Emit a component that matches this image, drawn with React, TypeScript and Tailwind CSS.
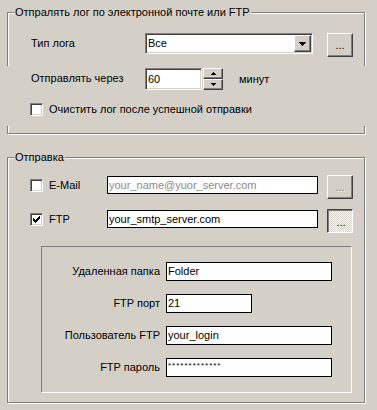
const raised =
  "border border-t-white border-l-white border-b-[#404040] border-r-[#404040] shadow-[inset_-1px_-1px_0_#808080] bg-[#d4d0c8]";
const sunken =
  "border border-t-[#808080] border-l-[#808080] border-b-white border-r-white shadow-[inset_1px_1px_0_#404040,inset_-1px_-1px_0_#d4d0c8]";

const CheckBox = ({ checked }: { checked?: boolean }) => (
  <div className={`w-[13px] h-[13px] shrink-0 bg-white flex items-center justify-center ${sunken}`}>
    {checked && (
      <svg width="7" height="7" viewBox="0 0 7 7" shapeRendering="crispEdges">
        <rect x="0" y="2" width="1" height="3" fill="#000" />
        <rect x="1" y="3" width="1" height="3" fill="#000" />
        <rect x="2" y="4" width="1" height="3" fill="#000" />
        <rect x="3" y="3" width="1" height="3" fill="#000" />
        <rect x="4" y="2" width="1" height="3" fill="#000" />
        <rect x="5" y="1" width="1" height="3" fill="#000" />
        <rect x="6" y="0" width="1" height="3" fill="#000" />
      </svg>
    )}
  </div>
);

const DotsButton = ({ state }: { state?: "disabled" | "pressed" }) => {
  if (state === "pressed") {
    return (
      <div className="ml-[9px] w-[26px] h-[24px] flex items-center justify-center pt-[3px] pl-[2px] border border-t-[#404040] border-l-[#404040] border-b-white border-r-white shadow-[inset_1px_1px_0_#808080] bg-[repeating-conic-gradient(#ffffff_0_25%,#d4d0c8_0_50%)] bg-[length:2px_2px]">
        ...
      </div>
    );
  }
  return (
    <div
      className={`w-[26px] h-[24px] flex items-center justify-center pt-[1px] ${raised} ${
        state === "disabled" ? "ml-[9px] text-[#808080] [text-shadow:1px_1px_0_#fff]" : "ml-[14px]"
      }`}
    >
      ...
    </div>
  );
};

const Field = ({ text, w, muted }: { text: string; w: string; muted?: boolean }) => (
  <div
    className={`${w} h-[18px] border border-black bg-white pl-px flex items-center ${
      muted ? "text-[#8a8a8a]" : "text-black"
    }`}
  >
    {text}
  </div>
);

const Arrow = ({ up }: { up?: boolean }) => (
  <svg width="5" height="3" viewBox="0 0 5 3" shapeRendering="crispEdges">
    {up ? (
      <>
        <rect x="2" y="0" width="1" height="1" fill="#000" />
        <rect x="1" y="1" width="3" height="1" fill="#000" />
        <rect x="0" y="2" width="5" height="1" fill="#000" />
      </>
    ) : (
      <>
        <rect x="0" y="0" width="5" height="1" fill="#000" />
        <rect x="1" y="1" width="3" height="1" fill="#000" />
        <rect x="2" y="2" width="1" height="1" fill="#000" />
      </>
    )}
  </svg>
);

export default function App() {
  return (
    <div className="w-[377px] h-[410px] overflow-hidden bg-[#d4d0c8] pt-[12px] pl-[7px] font-['Liberation_Sans',Arial,sans-serif] text-[11px] leading-[13px] text-black">
      {/* Отправка лога */}
      <div className="w-[358px]">
        <div className="h-[54px] border-t border-x border-[#808080] shadow-[inset_1px_1px_0_#fff,1px_0_0_#fff]">
          <div className="-mt-[7px] ml-[6px] w-fit bg-[#d4d0c8] px-px">
            Отпралять лог по электронной почте или FTP
          </div>
          <div className="mt-[14px] flex items-start pl-[23px]">
            <div className="w-[114px] pt-[4px]">Тип лога</div>
            <div className={`w-[168px] h-[21px] bg-white flex items-center ${sunken}`}>
              <div className="flex-1 pl-[2px]">Все</div>
              <div className={`w-[17px] h-[17px] mr-px flex items-center justify-center ${raised}`}>
                <svg width="7" height="4" viewBox="0 0 7 4" shapeRendering="crispEdges">
                  <rect x="0" y="0" width="7" height="1" fill="#000" />
                  <rect x="1" y="1" width="5" height="1" fill="#000" />
                  <rect x="2" y="2" width="3" height="1" fill="#000" />
                  <rect x="3" y="3" width="1" height="1" fill="#000" />
                </svg>
              </div>
            </div>
            <DotsButton />
          </div>
        </div>

        <div className="h-[60px] pt-[2px]">
          <div className="flex items-start pl-[24px]">
            <div className="w-[114px] pt-[4px]">Отправлять через</div>
            <div className={`w-[57px] h-[22px] bg-white pl-[2px] flex items-center ${sunken}`}>60</div>
            <div className="ml-px flex flex-col">
              <div className={`w-[20px] h-[11px] flex items-center justify-center ${raised}`}>
                <Arrow up />
              </div>
              <div className={`w-[20px] h-[11px] flex items-center justify-center ${raised}`}>
                <Arrow />
              </div>
            </div>
            <div className="ml-[16px] pt-[5px]">минут</div>
          </div>
          <div className="mt-[13px] ml-[23px] flex items-center gap-[6px]">
            <CheckBox />
            <span>Очистить лог после успешной отправки</span>
          </div>
        </div>

        <div className="h-[8px] border-x border-b border-[#808080] shadow-[inset_1px_0_0_#fff,1px_1px_0_#fff]" />
      </div>

      {/* Отправка */}
      <div className="mt-[23px] w-[358px] h-[246px] border border-[#808080] shadow-[inset_1px_1px_0_#fff,1px_1px_0_#fff]">
        <div className="-mt-[7px] ml-[6px] w-fit bg-[#d4d0c8] px-px">Отправка</div>

        <div className="mt-[11px] flex items-start pl-[22px]">
          <div className="w-[77px] mt-[4px] flex items-center gap-[6px]">
            <CheckBox />
            <span>E-Mail</span>
          </div>
          <div className="mt-px">
            <Field text="your_name@yuor_server.com" w="w-[211px]" muted />
          </div>
          <DotsButton state="disabled" />
        </div>

        <div className="mt-[10px] flex items-start pl-[22px]">
          <div className="w-[77px] mt-[4px] flex items-center gap-[6px]">
            <CheckBox checked />
            <span>FTP</span>
          </div>
          <div className="mt-px">
            <Field text="your_smtp_server.com" w="w-[211px]" />
          </div>
          <DotsButton state="pressed" />
        </div>

        <div className="mt-[13px] ml-[33px] w-[311px] h-[147px] pt-[15px] border border-t-[#808080] border-l-[#808080] border-b-white border-r-white flex flex-col gap-[13px]">
          {[
            { label: "Удаленная папка", value: "Folder", w: "w-[166px]" },
            { label: "FTP порт", value: "21", w: "w-[86px]" },
            { label: "Пользователь FTP", value: "your_login", w: "w-[166px]" },
            { label: "FTP пароль", value: "", w: "w-[166px]" },
          ].map((row) => (
            <div key={row.label} className="flex items-center">
              <div className="w-[118px] text-right">{row.label}</div>
              <div className={`ml-[6px] ${row.w} h-[19px] border border-black bg-white pl-px flex items-center`}>
                {row.label === "FTP пароль" ? (
                  <span className="text-[8px] leading-none self-start mt-[3px] tracking-[1px]">*************</span>
                ) : (
                  row.value
                )}
              </div>
            </div>
          ))}
        </div>
      </div>
    </div>
  );
}
